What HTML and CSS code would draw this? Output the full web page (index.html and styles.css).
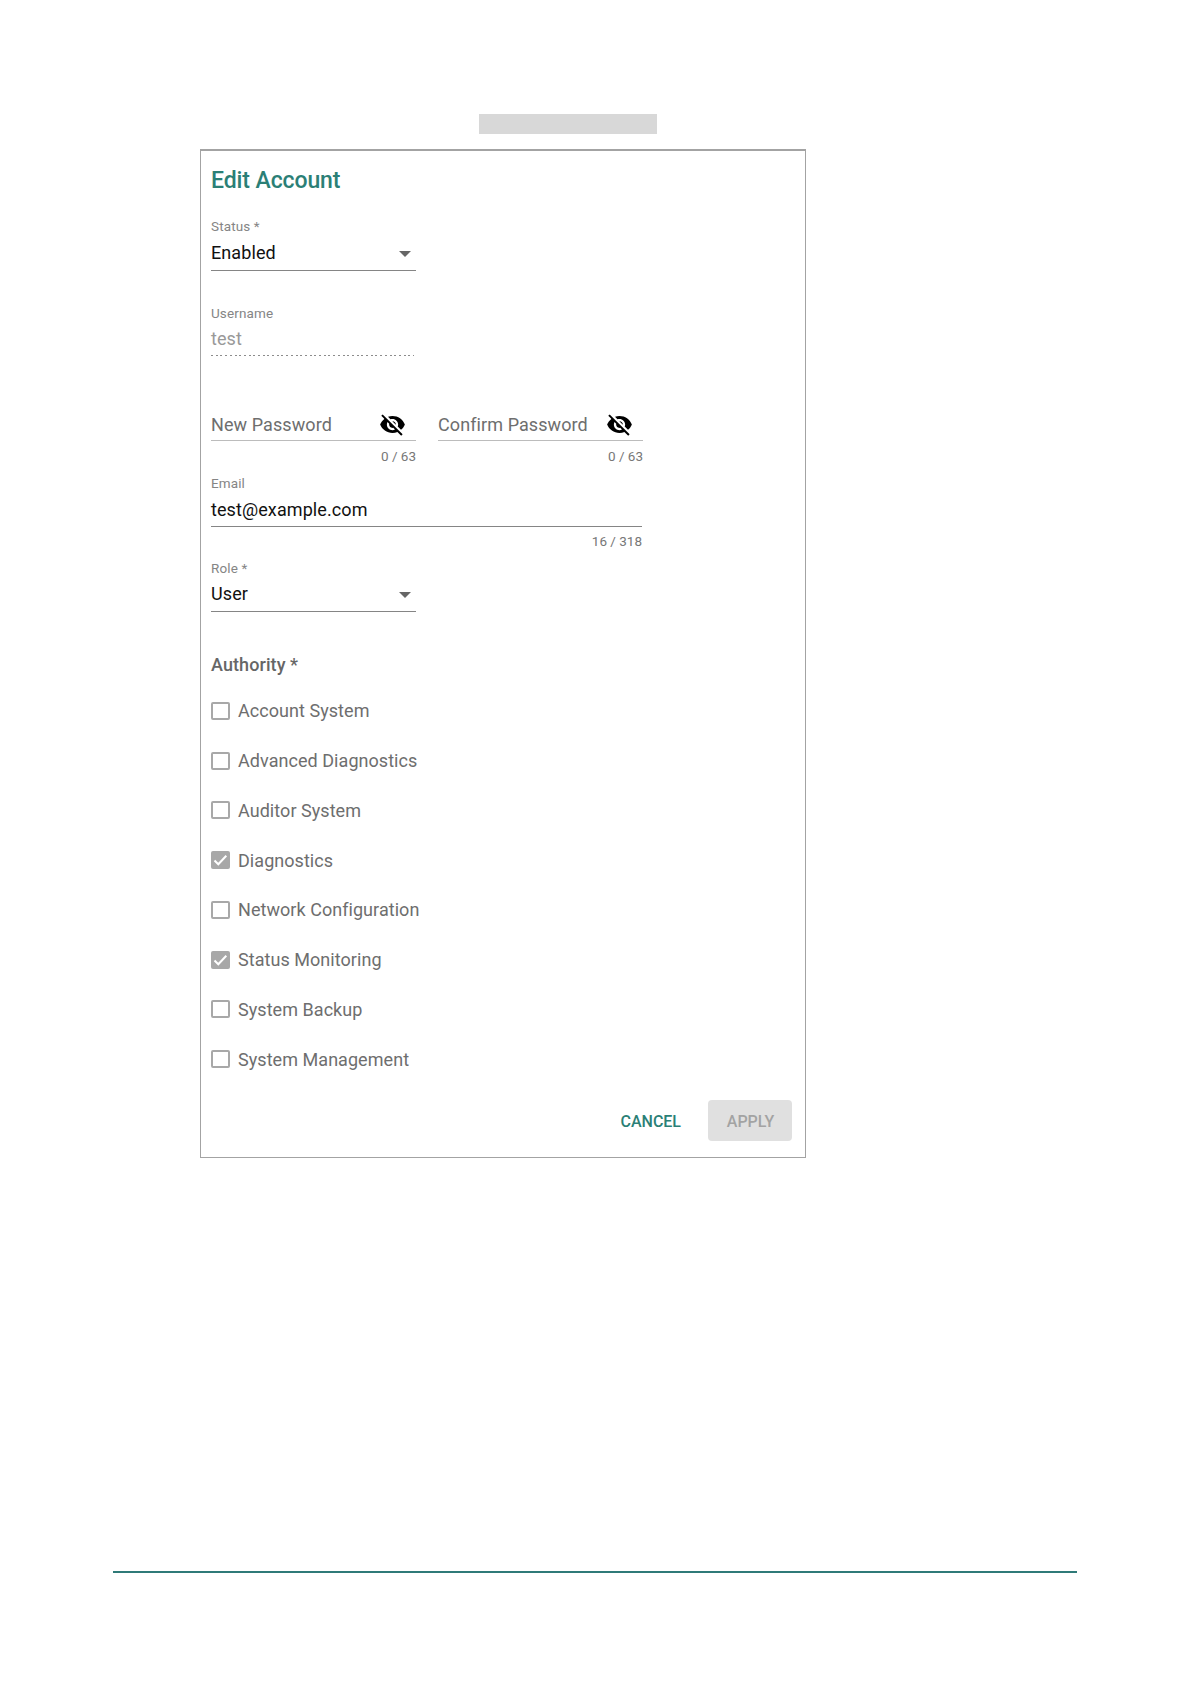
FILE: index.html
```html
<!DOCTYPE html>
<html lang="en">
<head>
  <meta charset="UTF-8" />
  <meta name="viewport" content="width=device-width, initial-scale=1.0" />
  <title>Edit Account</title>
  <link rel="stylesheet" href="styles.css">
</head>
<body>
  <div class="highlight"></div>

  <form class="card">
    <h1>Edit Account</h1>

    <div class="field status">
      <label>Status *</label>
      <div class="value"><span>Enabled</span><i class="arrow"></i></div>
    </div>

    <div class="field username">
      <label>Username</label>
      <div class="value"><span>test</span></div>
    </div>

    <div class="passwords">
      <div class="field password">
        <div class="value">
          <span>New Password</span>
          <svg class="eye" viewBox="0 0 24 24"><path d="M12 7c2.76 0 5 2.24 5 5 0 .65-.13 1.26-.36 1.83l2.92 2.92c1.51-1.26 2.7-2.89 3.43-4.75-1.73-4.39-6-7.5-11-7.5-1.4 0-2.74.25-3.98.7l2.16 2.16C10.74 7.13 11.35 7 12 7zM2 4.27l2.28 2.28.46.46C3.08 8.3 1.78 10.02 1 12c1.73 4.39 6 7.5 11 7.5 1.55 0 3.03-.3 4.38-.84l.42.42L19.73 22 21 20.73 3.27 3 2 4.27zM7.53 9.8l1.55 1.55c-.05.21-.08.43-.08.65 0 1.66 1.34 3 3 3 .22 0 .44-.03.65-.08l1.55 1.55c-.67.33-1.41.53-2.2.53-2.76 0-5-2.24-5-5 0-.79.2-1.53.53-2.2zm4.31-.78l3.15 3.15.02-.16c0-1.66-1.34-3-3-3l-.17.01z"/></svg>
        </div>
        <small>0 / 63</small>
      </div>
      <div class="field password">
        <div class="value">
          <span>Confirm Password</span>
          <svg class="eye" viewBox="0 0 24 24"><path d="M12 7c2.76 0 5 2.24 5 5 0 .65-.13 1.26-.36 1.83l2.92 2.92c1.51-1.26 2.7-2.89 3.43-4.75-1.73-4.39-6-7.5-11-7.5-1.4 0-2.74.25-3.98.7l2.16 2.16C10.74 7.13 11.35 7 12 7zM2 4.27l2.28 2.28.46.46C3.08 8.3 1.78 10.02 1 12c1.73 4.39 6 7.5 11 7.5 1.55 0 3.03-.3 4.38-.84l.42.42L19.73 22 21 20.73 3.27 3 2 4.27zM7.53 9.8l1.55 1.55c-.05.21-.08.43-.08.65 0 1.66 1.34 3 3 3 .22 0 .44-.03.65-.08l1.55 1.55c-.67.33-1.41.53-2.2.53-2.76 0-5-2.24-5-5 0-.79.2-1.53.53-2.2zm4.31-.78l3.15 3.15.02-.16c0-1.66-1.34-3-3-3l-.17.01z"/></svg>
        </div>
        <small>0 / 63</small>
      </div>
    </div>

    <div class="field email">
      <label>Email</label>
      <div class="value"><span>test@example.com</span></div>
      <small>16 / 318</small>
    </div>

    <div class="field role">
      <label>Role *</label>
      <div class="value"><span>User</span><i class="arrow"></i></div>
    </div>

    <h2>Authority *</h2>
    <div class="authority">
      <div class="check"><span class="box"></span>Account System</div>
      <div class="check"><span class="box"></span>Advanced Diagnostics</div>
      <div class="check"><span class="box"></span>Auditor System</div>
      <div class="check"><span class="box checked"><svg viewBox="0 0 19 18"><path d="M3.5 9.5l3.8 3.8 8-8.6"/></svg></span>Diagnostics</div>
      <div class="check"><span class="box"></span>Network Configuration</div>
      <div class="check"><span class="box checked"><svg viewBox="0 0 19 18"><path d="M3.5 9.5l3.8 3.8 8-8.6"/></svg></span>Status Monitoring</div>
      <div class="check"><span class="box"></span>System Backup</div>
      <div class="check"><span class="box"></span>System Management</div>
    </div>

    <div class="actions">
      <button type="button" class="cancel">CANCEL</button>
      <button type="button" class="apply" disabled>APPLY</button>
    </div>
  </form>

  <hr class="footer-line">
</body>
</html>
```

FILE: styles.css
```css
:root {
  --green: #2b7f76;
  --border: #a3a3a3;
  --line: #858585;
  --muted: #6e6e6e;
}
* {
  box-sizing: border-box;
}
body {
  margin: 0;
  height: 1684px;
  display: flex;
  flex-direction: column;
  background: #fff;
  color: #111;
  font-family: Roboto, sans-serif;
  font-size: 18px;
}
.highlight {
  width: 178px;
  height: 20px;
  margin: 114px 0 0 479px;
  background: #d8d8d8;
}
.card {
  width: 606px;
  height: 1009px;
  margin: 15px 0 0 200px;
  padding: 14px 13px 0 10px;
  border: 1px solid var(--border);
  border-top-width: 2px;
}
h1 {
  margin: 0 0 21px;
  color: var(--green);
  font-size: 23px;
  font-weight: 500;
  line-height: 32px;
  letter-spacing: -0.1px;
}
.field {
  width: 205px;
  display: flex;
  flex-direction: column;
}
.field label {
  color: #858585;
  font-size: 13.5px;
  line-height: 16px;
  letter-spacing: 0.12px;
  margin-bottom: 7px;
}
.value {
  display: flex;
  justify-content: space-between;
  align-items: center;
  height: 30px;
  padding-bottom: 5px;
  border-bottom: 1px solid var(--line);
  line-height: 24px;
  letter-spacing: 0.09px;
}
.arrow {
  width: 12px;
  height: 6px;
  margin: 2px 5px 0 0;
  background: #666;
  clip-path: polygon(0 0, 100% 0, 50% 100%);
}
.field small {
  align-self: flex-end;
  color: #777;
  font-size: 13.5px;
  line-height: 16px;
  letter-spacing: 0;
}
.username {
  margin-top: 34px;
}
.username label {
  margin-bottom: 5px;
}
.username .value {
  color: #999;
  border-bottom: 0;
  background: repeating-linear-gradient(to right, #8c8c8c 0 2px, transparent 2px 4.7px) 0 100% / 203px 1px no-repeat;
}
.passwords {
  display: flex;
  gap: 22px;
  margin-top: 57px;
}
.password .value {
  height: 28px;
  padding-bottom: 3px;
  border-bottom-color: #bcbcbc;
  color: var(--muted);
}
.password small {
  margin-top: 7px;
}
.eye {
  width: 27px;
  height: 27px;
  margin: -1px 10px 0 0;
  fill: #000;
}
.email {
  width: 431px;
  margin-top: 11px;
}
.email .value {
  height: 29px;
  padding-bottom: 4px;
}
.email small {
  margin-top: 6px;
}
.role {
  margin-top: 11px;
}
.role label {
  margin-bottom: 6px;
}
h2 {
  margin: 41px 0 9.1px;
  color: #666;
  font-size: 18px;
  font-weight: 500;
  line-height: 24px;
  letter-spacing: 0.08px;
}
.check {
  display: flex;
  align-items: center;
  gap: 8px;
  height: 49.74px;
  color: var(--muted);
  letter-spacing: 0.05px;
}
.box {
  width: 19px;
  height: 18px;
  border: 2px solid #a8a8a8;
  border-radius: 2px;
}
.box.checked {
  border: 0;
  background: #a8a8a8;
}
.box svg {
  display: block;
  fill: none;
  stroke: #fff;
  stroke-width: 2;
}
.actions {
  display: flex;
  justify-content: flex-end;
  align-items: center;
  gap: 27px;
  margin-top: 16px;
}
button {
  padding: 2px 0 0;
  border: 0;
  background: none;
  font-family: inherit;
  font-size: 16px;
  font-weight: 500;
}
.cancel {
  color: var(--green);
}
.apply {
  width: 84px;
  height: 41px;
  padding-left: 1px;
  border-radius: 4px;
  background: #e0e0e0;
  color: #a3a3a3;
}
.footer-line {
  width: 964px;
  height: 2px;
  margin: 413px 0 0 113px;
  border: 0;
  background: #2f7a78;
}
```
